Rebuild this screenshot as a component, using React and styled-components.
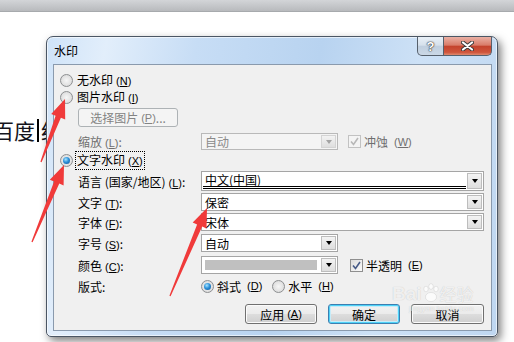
import React from 'react';
import styled, { createGlobalStyle, css } from 'styled-components';

const GlobalStyle = createGlobalStyle`
  html, body { margin: 0; padding: 0; background: #fff; }
  body { font-family: "Noto Sans CJK SC", "Liberation Sans", sans-serif; }
`;

const Screen = styled.div`
  position: relative;
  width: 514px;
  height: 342px;
  overflow: hidden;
  background: #fff;
`;

const TopBar = styled.div`
  height: 11px;
  border-bottom: 1px solid #a7aaad;
  background: linear-gradient(#d3d5d8, #b8babd);
`;

const Desk = styled.div`
  display: flex;
  align-items: flex-start;
  padding-top: 24px;
`;

const Doc = styled.div`
  width: 46px;
  flex: none;
  margin-top: 82px;
  overflow: hidden;
`;

const DocLine = styled.div`
  display: flex;
  align-items: center;
  margin-left: -7px;
  font-size: 21px;
  line-height: 24px;
  color: #14141c;
  white-space: nowrap;
`;

const Caret = styled.span`
  width: 2px;
  height: 23px;
  margin: 0 2px 0 2px;
  background: #000;
  flex: none;
`;

const Window = styled.div`
  width: 452px;
  height: 301px;
  box-sizing: border-box;
  flex: none;
  display: flex;
  flex-direction: column;
  padding: 0 5px 5px 6px;
  border: 1px solid #4b5664;
  border-radius: 7px 7px 5px 5px;
  background: linear-gradient(100deg, #cfe3f8 0%, #e2eefb 12%, #c7ddf5 30%, #b8d3f0 55%, #cde1f6 75%, #bfd7f1 100%);
  box-shadow: inset 0 0 0 1px rgba(255, 255, 255, 0.6), 3px 4px 9px rgba(0, 0, 0, 0.5);
`;

const TitleBar = styled.div`
  height: 27px;
  flex: none;
  display: flex;
  align-items: flex-start;
  justify-content: space-between;
`;

const Title = styled.span`
  font-size: 12px;
  line-height: 27px;
  padding-left: 1px;
  color: #000;
`;

const Captions = styled.div`
  display: flex;
`;

const CaptionButton = styled.div`
  height: 19px;
  box-sizing: border-box;
  display: flex;
  align-items: center;
  justify-content: center;
  border: 1px solid #56606c;
  border-top: none;
  width: ${p => (p.$close ? 48 : 27)}px;
  border-radius: ${p => (p.$close ? '0 0 5px 0' : '0 0 0 5px')};
  background: ${p => (p.$close
    ? 'linear-gradient(#eab0a4, #d97c69 45%, #c4432d 52%, #cf553c 85%, #df8a70)'
    : 'linear-gradient(#e9f0f7, #d6e1ec 45%, #c0cfdf 52%, #cbd8e6)')};
  color: #fff;
  font: bold 13px "Liberation Sans", sans-serif;
  text-shadow: 0 0 1px #333, 0 0 1px #333, 0 0 2px #555;
  & + & { border-left: none; }
`;

const Client = styled.div`
  flex: 1;
  display: flex;
  flex-direction: column;
  background: #f0f0f0;
  border: 1px solid #8a9aad;
  padding: 7px 7px 0 6px;
  font-size: 12px;
  color: #000;
`;

const Row = styled.div`
  display: flex;
  align-items: center;
  height: ${p => p.$h || 16}px;
  margin-top: ${p => p.$gap || 0}px;
  padding-left: ${p => (p.$indent ? 18 : 0)}px;
  justify-content: ${p => (p.$end ? 'flex-end' : 'flex-start')};
  gap: ${p => (p.$end ? 11 : 0)}px;
  flex: none;
`;

const Label = styled.span`
  width: ${p => p.$w || 123}px;
  flex: none;
  white-space: nowrap;
  color: ${p => (p.$disabled ? '#6f6f6f' : '#000')};
`;

const Option = styled.label`
  display: flex;
  align-items: center;
  gap: 3px;
  margin-right: ${p => p.$mr || 0}px;
  color: ${p => (p.$disabled ? '#6f6f6f' : '#000')};
  white-space: nowrap;
`;

const OptionText = styled.span`
  padding: 0 1px;
  line-height: 15px;
  ${p => p.$focus && css`outline: 1px dotted #000;`}
`;

const Radio = styled.span`
  position: relative;
  width: 13px;
  height: 13px;
  box-sizing: border-box;
  flex: none;
  border-radius: 50%;
  border: 1px solid #8d8f91;
  background: radial-gradient(circle at 50% 50%, #f6f6f6 0, #e2e2e2 60%, #d0d0d0 100%);
  ${p => p.$checked && css`
    &::after {
      content: '';
      position: absolute;
      left: 2px;
      top: 2px;
      width: 7px;
      height: 7px;
      border-radius: 50%;
      background: radial-gradient(circle at 40% 35%, #a8e4ff 0, #2d92da 45%, #0b4f94 100%);
    }
  `}
`;

const Check = styled.span`
  width: 13px;
  height: 13px;
  box-sizing: border-box;
  flex: none;
  display: flex;
  align-items: center;
  justify-content: center;
  border: 1px solid ${p => (p.$disabled ? '#c2c2c2' : '#8f8f8f')};
  background: ${p => (p.$disabled ? '#f4f4f4' : 'linear-gradient(135deg, #dcdcdc, #fbfbfb)')};
  color: ${p => (p.$disabled ? '#b8b8b8' : '#465a87')};
`;

const Combo = styled.div`
  display: flex;
  box-sizing: border-box;
  height: 100%;
  width: ${p => (p.$wide ? 283 : 137)}px;
  padding: 1px;
  border: 1px solid ${p => (p.$disabled ? '#b9b9b9' : '#a5a5a5')};
  background: ${p => (p.$disabled ? '#f4f4f4' : '#fff')};
  color: ${p => (p.$disabled ? '#8a8a8a' : '#000')};
`;

const ComboText = styled.div`
  flex: 1;
  display: flex;
  align-items: center;
  padding-left: 2px;
  margin-right: 1px;
  box-sizing: border-box;
  ${p => p.$underline && css`border-bottom: 3px double #000;`}
`;

const Swatch = styled.div`
  flex: 1;
  margin: 2px 4px 2px 2px;
  background: #c0c0c0;
`;

const ComboArrow = styled.div`
  width: 15px;
  flex: none;
  box-sizing: border-box;
  display: flex;
  align-items: center;
  justify-content: center;
  border: 1px solid ${p => (p.$disabled ? '#d4d4d4' : '#bdbdbd')};
  background: linear-gradient(#f3f3f3, #dedede);
  &::after {
    content: '';
    border-left: 3.5px solid transparent;
    border-right: 3.5px solid transparent;
    border-top: 4px solid ${p => (p.$disabled ? '#a3a3a3' : '#000')};
  }
`;

const PushButton = styled.div`
  width: ${p => p.$w || 72}px;
  height: 100%;
  box-sizing: border-box;
  display: flex;
  align-items: center;
  justify-content: center;
  border: 1px solid #707070;
  border-radius: 3px;
  background: linear-gradient(#f2f2f2 0, #ebebeb 49%, #dddddd 50%, #cfcfcf 100%);
  box-shadow: inset 0 0 0 1px #fbfbfb;
  white-space: nowrap;
  ${p => p.$default && css`
    border-color: #3c7fb1;
    box-shadow: inset 0 0 0 1px #4ed2f7, inset 0 0 0 2px #c6ecf9;
  `}
  ${p => p.$disabled && css`
    border-color: #adb2b5;
    background: #f4f4f4;
    box-shadow: none;
    color: #838383;
  `}
`;

const Key = styled.span`
  font-family: "Liberation Sans", sans-serif;
  font-size: 11px;
  margin-left: ${p => (p.$tight ? 0 : 3)}px;
  u { text-underline-offset: 1px; }
`;

const Overlay = styled.svg`
  position: absolute;
  left: 0;
  top: 0;
  pointer-events: none;
`;

const Watermark = styled.div`
  position: absolute;
  left: 392px;
  top: 283px;
  display: flex;
  flex-direction: column;
  align-items: flex-end;
  color: rgba(255, 255, 255, 0.75);
  text-shadow: 0 0 1px rgba(0, 0, 0, 0.22);
  pointer-events: none;
`;

const MarkTop = styled.div`
  display: flex;
  align-items: flex-end;
  font: bold 19px/18px "Liberation Sans", sans-serif;
`;

const MarkCn = styled.span`
  font: 17px/18px "Noto Sans CJK SC", sans-serif;
`;

const MarkUrl = styled.div`
  font: 8px/10px "Liberation Sans", sans-serif;
  margin-top: 1px;
`;

const Hot = ({ k, tight }) => (
  <Key $tight={tight}>(<u>{k}</u>)</Key>
);

const arrowPoints = ([tx, ty], [hx, hy], len = 19, half = 7.5, w0 = 0.6, w1 = 2.8) => {
  const dx = hx - tx;
  const dy = hy - ty;
  const l = Math.hypot(dx, dy);
  const ux = dx / l;
  const uy = dy / l;
  const px = -uy;
  const py = ux;
  const bx = hx - ux * len;
  const by = hy - uy * len;
  return [
    [tx + px * w0, ty + py * w0],
    [bx + px * w1, by + py * w1],
    [bx + px * half, by + py * half],
    [hx, hy],
    [bx - px * half, by - py * half],
    [bx - px * w1, by - py * w1],
    [tx - px * w0, ty - py * w0],
  ].map(p => p.map(v => v.toFixed(1)).join(',')).join(' ');
};

const arrows = [
  [[41, 162], [65, 99]],
  [[32, 242], [64, 165]],
  [[170, 296], [207, 208]],
];

const CheckMark = () => (
  <svg width="9" height="9" viewBox="0 0 9 9">
    <path d="M1 4.5 L3.5 7.5 L8 1" fill="none" stroke="currentColor" strokeWidth="1.6" />
  </svg>
);

const CloseGlyph = () => (
  <svg width="13" height="10" viewBox="0 0 13 10">
    <path d="M2 1.5 L11 8.5 M11 1.5 L2 8.5" stroke="#3a3a3a" strokeWidth="4" strokeLinecap="round" />
    <path d="M2 1.5 L11 8.5 M11 1.5 L2 8.5" stroke="#fff" strokeWidth="2.2" strokeLinecap="round" />
  </svg>
);

const App = () => (
  <Screen>
    <GlobalStyle />
    <TopBar />
    <Desk>
      <Doc>
        <DocLine>
          百度<Caret />经
        </DocLine>
      </Doc>
      <Window>
        <TitleBar>
          <Title>水印</Title>
          <Captions>
            <CaptionButton>?</CaptionButton>
            <CaptionButton $close><CloseGlyph /></CaptionButton>
          </Captions>
        </TitleBar>
        <Client>
          <Row>
            <Option><Radio /><OptionText>无水印<Hot k="N" /></OptionText></Option>
          </Row>
          <Row $gap={1}>
            <Option><Radio /><OptionText>图片水印<Hot k="I" /></OptionText></Option>
          </Row>
          <Row $gap={3} $h={19} $indent>
            <PushButton $w={100} $disabled>选择图片<Hot k="P" />...</PushButton>
          </Row>
          <Row $gap={6} $h={17} $indent>
            <Label $disabled>缩放<Hot k="L" />:</Label>
            <Combo $disabled>
              <ComboText>自动</ComboText>
              <ComboArrow $disabled />
            </Combo>
            <Option style={{ marginLeft: 10 }} $disabled>
              <Check $disabled><CheckMark /></Check>冲蚀<Hot k="W" />
            </Option>
          </Row>
          <Row $gap={2}>
            <Option><Radio $checked /><OptionText $focus>文字水印<Hot k="X" /></OptionText></Option>
          </Row>
          <Row $gap={3} $h={20} $indent>
            <Label>语言 (国家/地区)<Hot k="L" />:</Label>
            <Combo $wide>
              <ComboText $underline>中文(中国)</ComboText>
              <ComboArrow />
            </Combo>
          </Row>
          <Row $gap={2} $h={18} $indent>
            <Label>文字<Hot k="T" />:</Label>
            <Combo $wide>
              <ComboText>保密</ComboText>
              <ComboArrow />
            </Combo>
          </Row>
          <Row $gap={2} $h={18} $indent>
            <Label>字体<Hot k="F" />:</Label>
            <Combo $wide>
              <ComboText>宋体</ComboText>
              <ComboArrow />
            </Combo>
          </Row>
          <Row $gap={3} $h={18} $indent>
            <Label>字号<Hot k="S" />:</Label>
            <Combo>
              <ComboText>自动</ComboText>
              <ComboArrow />
            </Combo>
          </Row>
          <Row $gap={4} $h={18} $indent>
            <Label>颜色<Hot k="C" />:</Label>
            <Combo>
              <Swatch />
              <ComboArrow />
            </Combo>
            <Option style={{ marginLeft: 12 }}>
              <Check><CheckMark /></Check>半透明<Hot k="E" />
            </Option>
          </Row>
          <Row $gap={4} $indent>
            <Label>版式:</Label>
            <Option $mr={10}><Radio $checked />斜式<Hot k="D" /></Option>
            <Option><Radio />水平<Hot k="H" /></Option>
          </Row>
          <Row $gap={10} $h={20} $end>
            <PushButton>应用<Hot k="A" /></PushButton>
            <PushButton $default>确定</PushButton>
            <PushButton $w={73}>取消</PushButton>
          </Row>
        </Client>
      </Window>
    </Desk>
    <Watermark>
      <MarkTop>
        Bai
        <svg width="18" height="20" viewBox="0 0 18 20">
          <g fill="currentColor" stroke="rgba(0,0,0,0.15)" strokeWidth="0.5">
            <ellipse cx="4" cy="6" rx="2.2" ry="2.8" />
            <ellipse cx="9" cy="3.5" rx="2.2" ry="2.8" />
            <ellipse cx="14" cy="6" rx="2.2" ry="2.8" />
            <ellipse cx="9" cy="14" rx="5.5" ry="4.5" />
          </g>
        </svg>
        <MarkCn>经验</MarkCn>
      </MarkTop>
      <MarkUrl>jingyan.baidu.com</MarkUrl>
    </Watermark>
    <Overlay width="514" height="342" viewBox="0 0 514 342">
      {arrows.map(([tail, tip], i) => (
        <polygon key={i} points={arrowPoints(tail, tip)} fill="#f03a3a" />
      ))}
    </Overlay>
  </Screen>
);

export default App;
